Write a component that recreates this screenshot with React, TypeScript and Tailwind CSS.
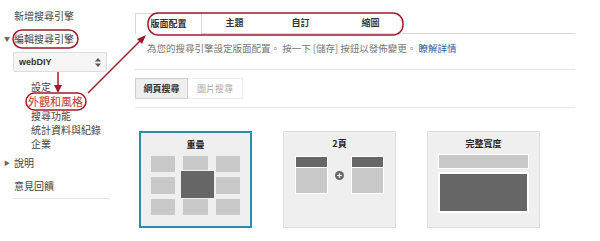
const sideItems = ['設定', '外觀和風格', '搜尋功能', '統計資料與紀錄', '企業']
const tabs = [
  { label: '版面配置', w: 'w-[67px]', active: true },
  { label: '主題', w: 'w-[65px]', active: false },
  { label: '自訂', w: 'w-[67px]', active: false },
  { label: '縮圖', w: 'w-[73px]', active: false },
]

function Cell({ dark }: { dark?: boolean }) {
  return <div className={dark ? 'bg-[#666]' : 'bg-[#c8c8c8]'} />
}

function OverlapPreview() {
  return (
    <div className="relative mt-[5px] mx-[10px] grid grid-cols-3 gap-x-[8px] gap-y-[5px] h-[59px]">
      {Array.from({ length: 9 }).map((_, i) => (
        <Cell key={i} />
      ))}
      {/* dark box sits over the middle cells */}
      <div className="absolute left-[29px] top-[14px] w-[35px] h-[29px] bg-[#666] border border-[#eee]" />
    </div>
  )
}

function TwoPagePreview() {
  const page = (
    <div className="w-[33px] h-[38px] flex flex-col border border-white bg-white">
      <div className="h-[10px] bg-[#666]" />
      <div className="flex-1 bg-[#c8c8c8] mt-[1px]" />
    </div>
  )
  return (
    <div className="mt-[6px] flex items-center justify-between px-[11px]">
      {page}
      <div className="w-[9px] h-[9px] rounded-full bg-[#666] flex items-center justify-center text-white text-[9px] leading-none font-bold">
        +
      </div>
      {page}
    </div>
  )
}

function FullWidthPreview() {
  return (
    <div className="mt-[4px] mx-[10px] flex flex-col gap-[3px]">
      <div className="h-[15px] bg-[#c8c8c8] border border-white" />
      <div className="h-[41px] bg-[#666] border-2 border-white" />
    </div>
  )
}

function LayoutCard({ title, selected, children }: { title: string; selected?: boolean; children: React.ReactNode }) {
  return (
    <div
      className={`w-[113px] h-[97px] bg-[#efefef] pt-[6px] ${
        selected ? 'border-2 border-[#2f8ba6]' : 'border border-[#dedede]'
      }`}
    >
      <div className="text-center text-[9px] font-bold text-[#222] leading-[12px]">{title}</div>
      {children}
    </div>
  )
}

export default function App() {
  return (
    <div className="relative w-[600px] h-[241px] bg-white overflow-hidden flex text-[#444] font-['Noto_Sans_CJK_TC','Liberation_Sans',sans-serif]">
      {/* sidebar */}
      <aside className="w-[120px] shrink-0 pt-[9px] text-[10px] leading-[14px]">
        <div className="pl-[14px]">新增搜尋引擎</div>
        <div className="mt-[9px] flex items-center">
          <span className="w-[14px] text-center text-[6px] text-[#666]">▼</span>
          <span>編輯搜尋引擎</span>
        </div>
        <div className="mt-[6px] ml-[13px] w-[94px] h-[20px] bg-[#f5f5f5] border border-[#ddd] rounded-[2px] flex items-center justify-between px-[5px]">
          <span className="font-bold text-[#333] font-['Liberation_Sans',sans-serif] text-[9px]">webDIY</span>
          <svg width="6" height="9" viewBox="0 0 6 9" fill="#555">
            <polygon points="0,3.5 6,3.5 3,0" />
            <polygon points="0,5.5 6,5.5 3,9" />
          </svg>
        </div>
        <ul className="mt-[8px]">
          {sideItems.map((s, i) => (
            <li key={s} className={i === 1 ? 'pl-[28px] text-[#c0392b] text-[11px] leading-[15px]' : 'pl-[31px]'}>
              {s}
            </li>
          ))}
        </ul>
        <div className="mt-[5px] flex items-center">
          <span className="w-[14px] text-center text-[6px] text-[#666]">▶</span>
          <span>說明</span>
        </div>
        <div className="mt-[9px] pl-[14px]">意見回饋</div>
        <div className="mt-[5px] ml-[12px] w-[98px] border-t border-[#e5e5e5]" />
      </aside>

      {/* main */}
      <main className="w-[455px] pt-[13px] pl-[15px]">
        <div className="flex h-[21px] border-b border-[#d8d8d8]">
          {tabs.map((t) => (
            <div
              key={t.label}
              className={`${t.w} flex items-center justify-center text-[9px] font-bold text-[#333] ${
                t.active ? 'bg-white border border-b-0 border-[#d8d8d8] -mb-px' : ''
              }`}
            >
              {t.label}
            </div>
          ))}
        </div>
        <p className="mt-[8px] pl-[12px] text-[9.5px] leading-[13px] text-[#777] whitespace-nowrap">
          為您的搜尋引擎設定版面配置。 按一下 [儲存] 按鈕以發佈變更。{' '}
          <span className="text-[#2a5aa0]">瞭解詳情</span>
        </p>
        <div className="mt-[14px] border-t border-[#e3e3e3]" />
        <div className="mt-[8px] flex">
          <div className="w-[53px] h-[21px] flex items-center justify-center bg-[#eee] border border-[#d0d0d0] text-[9px] font-bold text-[#333]">
            網頁搜尋
          </div>
          <div className="w-[55px] h-[21px] flex items-center justify-center border border-l-0 border-[#eee] text-[9px] text-[#aaa]">
            圖片搜尋
          </div>
        </div>
        <div className="mt-[8px] border-t border-[#e8e8e8]" />
        <div className="mt-[23px] pl-[4px] flex gap-[31px]">
          <LayoutCard title="重疊" selected>
            <OverlapPreview />
          </LayoutCard>
          <LayoutCard title="2頁">
            <TwoPagePreview />
          </LayoutCard>
          <LayoutCard title="完整寬度">
            <FullWidthPreview />
          </LayoutCard>
        </div>
      </main>

      {/* red annotations drawn over the screenshot */}
      <svg className="absolute inset-0 pointer-events-none" width="600" height="241" viewBox="0 0 600 241">
        <g fill="none" stroke="#a3162b" strokeWidth="1.5">
          <rect x="13" y="30" width="65" height="18" rx="9" />
          <rect x="26" y="93" width="60" height="17" rx="8.5" />
          <rect x="148" y="13" width="255" height="22" rx="10" />
          <line x1="58" y1="72" x2="58" y2="87" />
          <line x1="88" y1="93" x2="142" y2="39" />
        </g>
        <g fill="#a3162b">
          <polygon points="54,85 62,85 58,93" />
          <polygon points="146,35 137,39 142,44" />
        </g>
      </svg>
    </div>
  )
}
